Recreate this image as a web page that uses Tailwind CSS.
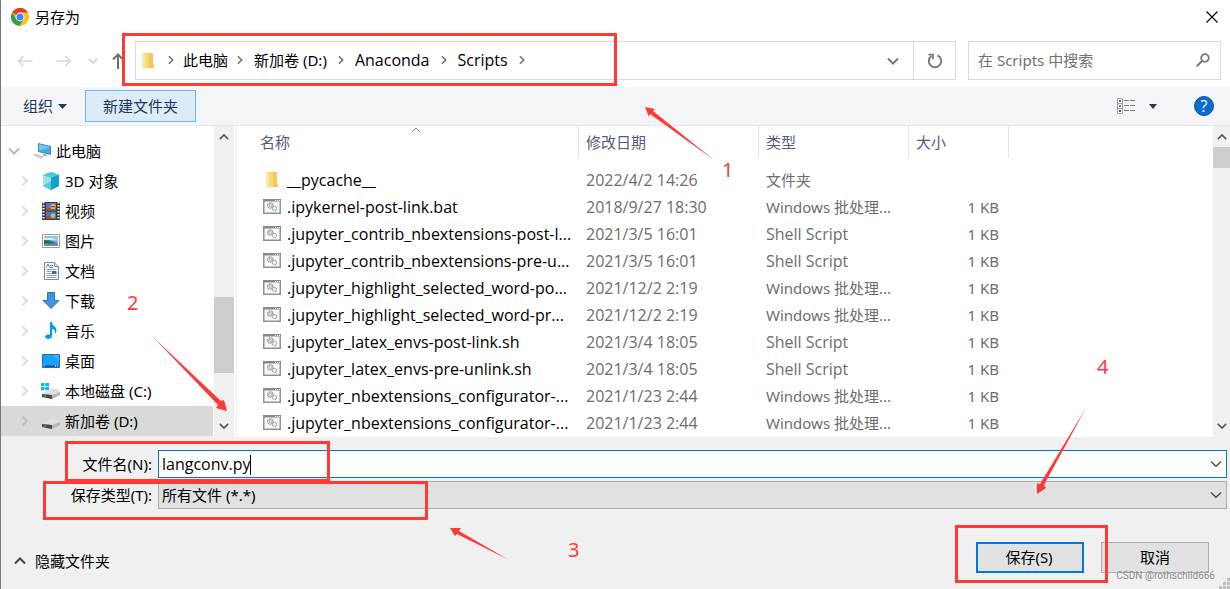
<!DOCTYPE html>
<html lang="zh-CN">
<head>
<meta charset="utf-8">
<title>另存为</title>
<script src="https://cdn.jsdelivr.net/npm/@tailwindcss/browser@4"></script>
</head>
<body class="relative flex min-h-screen flex-col overflow-hidden border-l border-[#777777] bg-[#f0f0f0] font-['Noto_Sans','Noto_Sans_CJK_SC',sans-serif] text-[15px] leading-5 text-black">

<!-- Shared symbols -->
<svg class="hidden" aria-hidden="true">
  <symbol id="chev-right" viewBox="0 0 8 12"><path d="M1.5 1.5 6 6 1.5 10.5" fill="none" stroke="currentColor" stroke-width="2"/></symbol>
  <symbol id="chev-down" viewBox="0 0 12 8"><path d="M1 1.5 6 6.5 11 1.5" fill="none" stroke="currentColor" stroke-width="2"/></symbol>
  <symbol id="chev-thin" viewBox="0 0 12 8"><path d="M1 1.5 6 6.3 11 1.5" fill="none" stroke="currentColor" stroke-width="1.2"/></symbol>
  <symbol id="folder" viewBox="0 0 14 18"><path d="M1 1h11v11l1 1v3H4z" fill="#f8d775"/><path d="M12 1v11l1 1v3H8V1z" fill="#f3c95c"/><path d="M1 1l3 1.500V18l-3-2z" fill="#ffe9a6"/></symbol>
  <symbol id="script" viewBox="0 0 18 15">
    <rect x=".75" y=".75" width="16.500" height="13.500" fill="#fafafa" stroke="#8e9296" stroke-width="1.500"/>
    <path d="M0 0h18v2.500H0z" fill="#85898d"/><path d="M12 1h1v1h-1zM14 1h1v1h-1zM16 1h1v1h-1z" fill="#fff"/>
    <circle cx="7.300" cy="6.500" r="2.700" fill="none" stroke="#8a8d90" stroke-width="1.300" stroke-dasharray="1.300 .5"/><circle cx="7.300" cy="6.500" r="1.200" fill="none" stroke="#8a8d90" stroke-width=".7"/>
    <circle cx="11.500" cy="9.500" r="2.100" fill="#eef7fc" stroke="#7fa9c4" stroke-width="1.200" stroke-dasharray="1.100 .4"/>
  </symbol>
  <symbol id="drive" viewBox="0 0 20 12"><path d="M1 7 9 2h8l2 3-8 3z" fill="#dfe1e3"/><path d="M1 7l10 1 8-3v3l-8 4-10-2z" fill="#b5b7b9"/><path d="M1 7l10 1v4L1 10z" fill="#47494b"/><path d="M3 8.500h2v1H3z" fill="#50d850"/></symbol>
</svg>

<!-- Title bar -->
<header class="flex h-[35px] shrink-0 items-center bg-white pr-3 pb-0.5 pl-2.5">
  <svg class="mr-1.5 size-[18px]" viewBox="0 0 18 18" aria-hidden="true">
    <circle cx="9" cy="9" r="9" fill="#fbc116"/>
    <path d="M9 9 1.200 4.500A9 9 0 0 1 16.800 4.500H9z" fill="#e33b2e"/>
    <path d="M1.200 4.500A9 9 0 0 0 8.400 18L12.500 11.200 9 9 5.300 11.200z" fill="#2aa24c"/>
    <circle cx="9" cy="9" r="4.400" fill="#fff"/><circle cx="9" cy="9" r="3.500" fill="#4285f4"/>
  </svg>
  <h1 class="flex-1">另存为</h1>
  <button aria-label="关闭" class="size-3"><svg class="size-3" viewBox="0 0 12 12"><path d="M.5.5l11 11M11.500.5l-11 11" stroke="#000" stroke-width="1.100"/></svg></button>
</header>

<!-- Navigation row -->
<nav class="flex h-[52px] shrink-0 items-start bg-white pt-1.5 pr-[9px] pl-4">
  <div class="flex h-[39px] w-[118px] shrink-0 items-center">
    <button aria-label="后退" class="mr-[23px] text-[#d6d6d6]"><svg class="h-3 w-4" viewBox="0 0 16 12"><path d="M15.500 6H1.500M6.500 1 1.500 6l5 5" fill="none" stroke="currentColor" stroke-width="1.600"/></svg></button>
    <button aria-label="前进" class="mr-4 text-[#d6d6d6]"><svg class="h-3 w-4" viewBox="0 0 16 12"><path d="M.5 6h14M9.500 1l5 5-5 5" fill="none" stroke="currentColor" stroke-width="1.600"/></svg></button>
    <button aria-label="最近位置" class="mr-3.5 text-[#d0d0d0]"><svg class="h-2 w-2.5" viewBox="0 0 12 8"><use href="#chev-down"/></svg></button>
    <button aria-label="向上" class="text-[#6f6f6f]"><svg class="h-4 w-3" viewBox="0 0 12 16"><path d="M6 16V2M1 6.500 6 1.500l5 5" fill="none" stroke="currentColor" stroke-width="2"/></svg></button>
  </div>
  <div class="flex h-[39px] flex-1 border border-[#d9d9d9]">
    <div class="flex flex-1 items-center pl-[5px]">
      <svg class="mr-3 h-[18px] w-3.5" viewBox="0 0 14 18"><use href="#folder"/></svg>
      <ol class="flex flex-1 items-center pb-0.5">
        <li class="flex items-center"><svg class="mr-2 h-2.5 w-2 text-[#777]" viewBox="0 0 8 12"><use href="#chev-right"/></svg><a href="#pc">此电脑</a></li>
        <li class="flex items-center"><svg class="mr-2.5 ml-2 h-2.5 w-2 text-[#777]" viewBox="0 0 8 12"><use href="#chev-right"/></svg><a href="#d">新加卷 (D:)</a></li>
        <li class="flex items-center"><svg class="mx-2.5 h-2.5 w-2 text-[#777]" viewBox="0 0 8 12"><use href="#chev-right"/></svg><a href="#anaconda" class="font-['Open_Sans',sans-serif] text-base">Anaconda</a></li>
        <li class="flex items-center"><svg class="mx-2.5 h-2.5 w-2 text-[#777]" viewBox="0 0 8 12"><use href="#chev-right"/></svg><a href="#scripts" class="font-['Open_Sans',sans-serif] text-base">Scripts</a></li>
        <li class="flex items-center"><svg class="mx-2.5 h-2.5 w-2 text-[#777]" viewBox="0 0 8 12"><use href="#chev-right"/></svg></li>
      </ol>
      <button aria-label="历史位置" class="mr-3.5 text-[#777]"><svg class="h-2 w-3" viewBox="0 0 12 8"><use href="#chev-down"/></svg></button>
    </div>
    <button aria-label="刷新" class="flex w-[42px] items-center justify-center border-l border-[#d9d9d9]">
      <svg class="size-4" viewBox="0 0 16 16"><path d="M10.500 2.400A6.200 6.200 0 1 1 4.500 3" fill="none" stroke="#777" stroke-width="1.900"/><path d="M1.500 1.700H6V6.200" fill="none" stroke="#777" stroke-width="1.700"/></svg>
    </button>
  </div>
  <label class="ml-3 flex h-[39px] w-[253px] shrink-0 items-center border border-[#d9d9d9] pr-2.5 pb-0.5 pl-[9px]">
    <input type="search" aria-label="搜索" placeholder="在 Scripts 中搜索" class="min-w-0 flex-1 outline-none placeholder:text-[#707070]">
    <svg class="h-3.5 w-3.5" viewBox="0 0 14 14"><circle cx="9" cy="5" r="3.800" fill="none" stroke="#777" stroke-width="1.800"/><path d="M6.200 7.800.8 13.200" stroke="#777" stroke-width="2"/></svg>
  </label>
</nav>

<!-- Command bar -->
<div class="flex h-[39px] shrink-0 items-center border-b border-[#e8e8e8] bg-[#f4f5f8] pr-4 pl-[22px] text-[#1e395b]">
  <button class="mr-[18px] flex items-center gap-[5px]">组织<svg class="h-[5px] w-[9px]" viewBox="0 0 9 5"><path d="M0 0h9L4.500 5z" fill="currentColor"/></svg></button>
  <button class="h-8 w-[111px] border border-[#6cb9e8] bg-[#dcebf5]">新建文件夹</button>
  <div class="flex-1"></div>
  <button aria-label="更改视图" class="flex items-center gap-3.5">
    <svg class="h-4 w-[18px]" viewBox="0 0 18 16"><path d="M.5.5h5v15h-5zM.5 5.500h5M.5 10.500h5" fill="#fff" stroke="#a0a0a0"/><path d="M7 2.500h5M13 2.500h5M7 7.500h5M13 7.500h5M7 12.500h5M13 12.500h5" stroke="#7d7d7d"/><path d="M2 2h2v2H2z" fill="#3d7fd0"/><path d="M2 7h2v2H2z" fill="#8a8a20"/><path d="M2 12h2v2H2z" fill="#c0311c"/></svg>
    <svg class="h-[5px] w-2" viewBox="0 0 7 4" preserveAspectRatio="none"><path d="M0 0h7L3.500 4z" fill="currentColor"/></svg>
  </button>
  <button aria-label="帮助" class="ml-[37px] flex size-5 items-center justify-center rounded-full border border-[#11508f] bg-[#0a6ccd] font-['Open_Sans',sans-serif] text-base text-white">?</button>
</div>

<main class="flex h-[311px] shrink-0 bg-white">
  <!-- Folder tree -->
  <aside class="w-[213px] shrink-0 border-b border-[#f0f0f0] pt-2.5 pr-px">
    <ul id="tree">
      <li class="flex h-[30px] items-center pl-[7px]">
        <svg class="mr-3 h-2 w-3 text-[#b8b8b8]" viewBox="0 0 12 8"><use href="#chev-down"/></svg>
        <svg class="mr-1 h-[18px] w-5" viewBox="0 0 20 18"><path d="M6 1l13 3v9L6 10z" fill="#5d7f99"/><path d="M7 2.200l11 2.600v7L7 9.200z" fill="#35aef0"/><path d="M7 2.200l11 2.600-11 4z" fill="#6dcaf8"/><path d="M11 11.500l4 1v2l-4-1z" fill="#a7b3bc"/><path d="M0 13l4-1.500 9 3L9 17z" fill="#dadde0"/><path d="M2 13l7 2.500M4 12.300l7 2.500" stroke="#b4b9be" stroke-width=".6"/></svg>
        此电脑
      </li>
    </ul>
  </aside>
  <div class="flex w-5 shrink-0 flex-col items-center bg-[#f0f0f0] text-[#555]">
    <svg class="mt-[7px] h-2 w-2.5 rotate-180" viewBox="0 0 12 8"><use href="#chev-down"/></svg>
    <div class="mt-[156px] h-[76px] w-full bg-[#cdcdcd]"></div>
    <div class="flex-1"></div>
    <svg class="mb-[7px] h-2 w-2.5" viewBox="0 0 12 8"><use href="#chev-down"/></svg>
  </div>
  <div class="w-[3px] shrink-0 border-r border-[#f0f0f0]"></div>

  <!-- File list -->
  <div class="relative min-w-0 flex-1 overflow-hidden">
    <svg class="absolute top-px left-[174px] h-1.5 w-2.5 rotate-180 text-[#666]" viewBox="0 0 12 8"><use href="#chev-thin"/></svg>
    <table class="w-full table-fixed border-collapse">
      <colgroup><col class="w-[342px]"><col class="w-[180px]"><col class="w-[150px]"><col class="w-[100px]"><col></colgroup>
      <thead class="text-left text-[#4c607a]">
        <tr class="h-10 align-top">
          <th scope="col" class="p-0 font-normal"><div class="h-8 border-r border-[#e3e3e3] pt-1.5 pl-[23px]">名称</div></th>
          <th scope="col" class="p-0 font-normal"><div class="h-8 border-r border-[#e3e3e3] pt-1.5 pl-[7px]">修改日期</div></th>
          <th scope="col" class="p-0 font-normal"><div class="h-8 border-r border-[#e3e3e3] pt-1.5 pl-[7px]">类型</div></th>
          <th scope="col" class="p-0 font-normal"><div class="h-8 border-r border-[#e3e3e3] pt-1.5 pl-[7px]">大小</div></th>
          <td></td>
        </tr>
      </thead>
      <tbody id="files"></tbody>
    </table>
  </div>
  <div class="flex w-[17px] shrink-0 flex-col items-center bg-[#f0f0f0] text-[#555]">
    <svg class="mt-[7px] h-2 w-2.5 rotate-180" viewBox="0 0 12 8"><use href="#chev-down"/></svg>
    <div class="mt-1.5 h-[21px] w-full bg-[#cdcdcd]"></div>
    <div class="flex-1"></div>
    <svg class="mb-[7px] h-2 w-2.5" viewBox="0 0 12 8"><use href="#chev-down"/></svg>
  </div>
</main>

<!-- File name and type -->
<form class="flex flex-1 flex-col pt-[13px]">
  <div class="flex h-7 pr-[3px]">
    <label for="fname" class="w-[151px] shrink-0 pt-1 text-right">文件名(N):</label>
    <div class="relative ml-1.5 flex flex-1 items-center border border-[#0078d7] bg-white pr-1">
      <input id="fname" type="text" value="langconv.py" class="h-full min-w-0 flex-1 pl-[3px] font-['Open_Sans',sans-serif] text-base outline-none">
      <span class="absolute top-1 left-[91px] h-5 w-px bg-black"></span>
      <svg class="h-2 w-3 text-[#444]" viewBox="0 0 12 8"><use href="#chev-thin"/></svg>
    </div>
  </div>
  <div class="mt-[3px] flex h-7 pr-[3px]">
    <label for="ftype" class="w-[151px] shrink-0 pt-1 text-right">保存类型(T):</label>
    <div class="relative ml-1.5 flex-1 border border-[#adadad] bg-[#e1e1e1]">
      <select id="ftype" class="h-full w-full appearance-none pl-[3px] outline-none"><option>所有文件 (*.*)</option></select>
      <svg class="pointer-events-none absolute top-[9px] right-1 h-2 w-3 text-[#444]" viewBox="0 0 12 8"><use href="#chev-thin"/></svg>
    </div>
  </div>
  <div class="mt-[33px] flex items-center pr-[21px] pl-[13px]">
    <button type="button" class="flex items-center gap-[9px] pt-1.5"><svg class="h-2 w-3 rotate-180 text-[#444]" viewBox="0 0 12 8"><use href="#chev-down"/></svg>隐藏文件夹</button>
    <div class="flex-1"></div>
    <button type="submit" class="mr-[17px] h-[31px] w-[108px] border-2 border-[#0078d7] bg-[#e1e1e1] pr-0.5 pb-0.5">保存(S)</button>
    <button type="button" class="h-[31px] w-[108px] border border-[#adadad] bg-[#e1e1e1] pb-0.5">取消</button>
  </div>
</form>

<!-- Resize grip and watermark -->
<svg class="absolute right-0 bottom-0 h-3 w-3" viewBox="0 0 12 12"><path d="M9 1h3v3H9zM5 5h3v3H5zM9 5h3v3H9zM1 9h3v3H1zM5 9h3v3H5zM9 9h3v3H9z" fill="#bdbdbd"/></svg>
<span class="absolute right-[15px] bottom-[5px] font-['Roboto',sans-serif] text-[10px] leading-4 text-[#8c8c8c]">CSDN @rothschild666</span>

<!-- Tutorial annotations -->
<div class="pointer-events-none absolute top-0 -left-px text-xl leading-6 text-[#ff3838]">
  <div class="absolute top-[33px] left-[122px] h-[53px] w-[495px] border-3 border-[#ff3838]"></div>
  <div class="absolute top-[441px] left-[65px] h-[41px] w-[265px] border-3 border-[#ff3838]"></div>
  <div class="absolute top-[481px] left-[43px] h-[39px] w-[385px] border-3 border-[#ff3838]"></div>
  <div class="absolute top-[525px] left-[955px] h-[58px] w-[153px] border-3 border-[#ff3838]"></div>
  <svg class="absolute top-0 left-0 h-[589px] w-[1230px]" viewBox="0 0 1230 589" fill="#ff3838">
    <path d="M645 107 655 109 653 111 714 160 650 114 649 117z"/>
    <path d="M153 337 221 401 224 400 227 411 216 408 218 405z"/>
    <path d="M450 528 461 528 459 531 509 560 457 534 455 536z"/>
    <path d="M1086 408 1044 485 1046 488 1037 494 1037 483 1040 484z"/>
  </svg>
  <span class="absolute top-[158px] left-[722px]">1</span>
  <span class="absolute top-[291px] left-[127px]">2</span>
  <span class="absolute top-[538px] left-[568px]">3</span>
  <span class="absolute top-[355px] left-[1097px]">4</span>
</div>

<script>
const tree = [
  ['3D 对象', '<path d="M10 1 18 4v11l-8 4-8-4V4z" fill="#28b8d0"/><path d="M10 1 18 4l-8 3-8-3z" fill="#4bcbd8"/><path d="M2 4l8 3v12l-8-4z" fill="#a2e4e6"/><path d="M10 7l8-3v11l-8 4z" fill="#12a3cb"/><path d="M2 15l8-5v9z" fill="#5accd5"/>'],
  ['视频', '<path d="M1 1h18v18H1z" fill="#3b3b3b"/><path d="M2.500 1v18M17.500 1v18" stroke="#f2f2f2" stroke-width="2" stroke-dasharray="1.500 1.500"/><path d="M5 2h10v7.500H5zM5 10.500h10V18H5z" fill="#3f78d8"/><path d="M5 7h5v2.500H5zM5 15h4v3H5z" fill="#d23a2a"/><circle cx="12" cy="5.500" r="2.600" fill="#f2c12e"/><path d="M10 5h4v1.300h-4z" fill="#c32f22"/><circle cx="12" cy="14.500" r="2.200" fill="#e8b72a"/><path d="M11 8h3v1.500h-3z" fill="#3f8b35"/>'],
  ['图片', '<path d="M1.500 3.500h17v13h-17z" fill="#fff" stroke="#9a9a9a"/><path d="M3 5h14v10H3z" fill="#8cc4ee"/><path d="M3 9c5-1 8 1 14 3v3H3z" fill="#4b7f78"/><path d="M3 12h14v3H3z" fill="#5d93b4"/><path d="M3 7h8l5 2H3z" fill="#d8edf8"/><path d="M3 9.500c4 0 8 2 11 3H3z" fill="#31644c"/>'],
  ['文档', '<path d="M3.500 1.500h10l4 4v13h-14z" fill="#fff" stroke="#858585"/><path d="M13.500 1.500v4h4" fill="#ddd" stroke="#858585"/><path d="M5.500 6.500 7 3l1.500 3.500M9 4.500h3M9 6.500h3" fill="none" stroke="#2995da"/><path d="M5.500 8.500h10M5.500 10.500h5M5.500 12.500h5M5.500 14.500h10M5.500 16.500h10" stroke="#8aa0b2"/><path d="M11 10h4.500v3H11z" fill="#2b6a9a"/>'],
  ['下载', '<path d="M6.500 1.500h7v8h4.500L10 17.500 2 9.500h4.500z" fill="#3f93e0" stroke="#2d74bd"/>'],
  ['音乐', '<path d="M9 1h2c0 4 5 4.500 4.500 9-.2 1.500-1 2.500-1.500 3 .5-3-.5-4.500-3-5v7c0 2-1.600 3-3.500 3S4 17 4 15.800C4 14 6 13 9 13.600z" fill="#0a9bf0"/>'],
  ['桌面', '<path d="M1.500 3.500h17v13h-17z" fill="#18a0fb" stroke="#1273b5"/><path d="M2 14.500h16V16H2z" fill="#0c5590"/><path d="M2.500 15h1M14 15h1M16 15h1" stroke="#fff"/><path d="M12 4h6v6z" fill="#3eb1fc"/>'],
  ['本地磁盘 (C:)', '<path d="M0 2h3.500v3.200H0zM4.300 2h3.700v3.200H4.300zM0 6h3.500v3.200H0zM4.300 6h3.700v3.200H4.300z" fill="#11b1ef"/><svg x="0" y="6" width="20" height="12"><use href="#drive"/></svg>'],
  ['新加卷 (D:)', '<svg x="0" y="6" width="20" height="12"><use href="#drive"/></svg>', true],
];
document.getElementById('tree').insertAdjacentHTML('beforeend', tree.map(([name, icon, on]) =>
  `<li class="flex h-[30px] items-center pl-5 ${on ? 'bg-[#d9d9d9]' : ''}">
    <svg class="mr-3 h-3 w-2 ${on ? 'text-[#bdbdbd]' : 'text-[#dcdcdc]'}" viewBox="0 0 8 12"><use href="#chev-right"/></svg>
    <svg class="mr-1 size-5" viewBox="0 0 20 20">${icon}</svg>${name}</li>`).join(''));

const bat = 'Windows 批处理...', sh = 'Shell Script';
const files = [
  ['__pycache__', '2022/4/2 14:26', '文件夹', ''],
  ['.ipykernel-post-link.bat', '2018/9/27 18:30', bat, '1 KB'],
  ['.jupyter_contrib_nbextensions-post-l...', '2021/3/5 16:01', sh, '1 KB'],
  ['.jupyter_contrib_nbextensions-pre-u...', '2021/3/5 16:01', sh, '1 KB'],
  ['.jupyter_highlight_selected_word-po...', '2021/12/2 2:19', bat, '1 KB'],
  ['.jupyter_highlight_selected_word-pr...', '2021/12/2 2:19', bat, '1 KB'],
  ['.jupyter_latex_envs-post-link.sh', '2021/3/4 18:05', sh, '1 KB'],
  ['.jupyter_latex_envs-pre-unlink.sh', '2021/3/4 18:05', sh, '1 KB'],
  ['.jupyter_nbextensions_configurator-...', '2021/1/23 2:44', bat, '1 KB'],
  ['.jupyter_nbextensions_configurator-...', '2021/1/23 2:44', bat, '1 KB'],
];
document.getElementById('files').innerHTML = files.map(([name, date, type, size]) =>
  `<tr class="h-[27px] whitespace-nowrap text-[#6d6d6d]">
    <td class="p-0 pl-[26px]"><div class="flex items-center font-['Open_Sans',sans-serif] text-base/5 text-black">${size
      ? '<svg class="mr-1.5 h-[15px] w-[18px]" viewBox="0 0 18 15"><use href="#script"/></svg>'
      : '<svg class="mr-2 ml-0.5 h-[18px] w-3.5" viewBox="0 0 14 18"><use href="#folder"/></svg>'}${name}</div></td>
    <td class="p-0 pl-[7px] font-['Open_Sans',sans-serif] text-base/5">${date}</td><td class="p-0 pl-[7px] ${type === sh ? "font-['Open_Sans',sans-serif] text-base/5" : ''}">${type}</td><td class="p-0 pr-2.5 text-right">${size}</td><td></td></tr>`).join('');
</script>
</body>
</html>
